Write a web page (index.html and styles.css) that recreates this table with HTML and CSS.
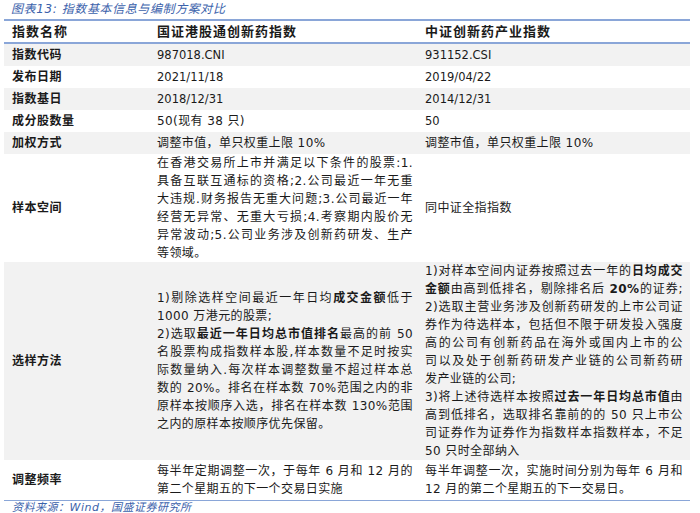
FILE: index.html
```html
<!DOCTYPE html>
<html lang="zh-CN">
<head>
<meta charset="utf-8">
<title>指数基本信息与编制方案对比</title>
<link rel="stylesheet" href="styles.css">
</head>
<body>
<div class="page">
  <div class="title">图表13: 指数基本信息与编制方案对比</div>
  <table class="tbl">
    <colgroup><col class="c1"><col class="c2"><col class="c3"></colgroup>
    <thead>
      <tr><th>指数名称</th><th>国证港股通创新药指数</th><th>中证创新药产业指数</th></tr>
    </thead>
    <tbody>
      <tr class="g"><td class="lab">指数代码</td><td class="lat">987018.CNI</td><td class="lat">931152.CSI</td></tr>
      <tr><td class="lab">发布日期</td><td class="lat">2021/11/18</td><td class="lat">2019/04/22</td></tr>
      <tr class="g"><td class="lab">指数基日</td><td class="lat">2018/12/31</td><td class="lat">2014/12/31</td></tr>
      <tr><td class="lab">成分股数量</td><td>50(现有 38 只)</td><td class="lat">50</td></tr>
      <tr class="g"><td class="lab">加权方式</td><td>调整市值，单只权重上限 10%</td><td>调整市值，单只权重上限 10%</td></tr>
      <tr class="tight">
        <td class="lab">样本空间</td>
        <td>
          <span class="ln">在香港交易所上市并满足以下条件的股票:1.</span>
          <span class="ln">具备互联互通标的资格;2.公司最近一年无重</span>
          <span class="ln">大违规.财务报告无重大问题;3.公司最近一年</span>
          <span class="ln">经营无异常、无重大亏损;4.考察期内股价无</span>
          <span class="ln">异常波动;5.公司业务涉及创新药研发、生产</span>
          <span class="ln e">等领域。</span>
        </td>
        <td>同中证全指指数</td>
      </tr>
      <tr class="g tight">
        <td class="lab">选样方法</td>
        <td>
          <span class="ln">1)剔除选样空间最近一年日均<b>成交金额</b>低于</span>
          <span class="ln e">1000 万港元的股票;</span>
          <span class="ln">2)选取<b>最近一年日均总市值排名</b>最高的前 50</span>
          <span class="ln">名股票构成指数样本股,样本数量不足时按实</span>
          <span class="ln">际数量纳入.每次样本调整数量不超过样本总</span>
          <span class="ln">数的 20%。排名在样本数 70%范围之内的非</span>
          <span class="ln">原样本按顺序入选，排名在样本数 130%范围</span>
          <span class="ln e">之内的原样本按顺序优先保留。</span>
        </td>
        <td>
          <span class="ln">1)对样本空间内证券按照过去一年的<b>日均成交</b></span>
          <span class="ln"><b>金额</b>由高到低排名，剔除排名后 <b>20%</b>的证券;</span>
          <span class="ln">2)选取主营业务涉及创新药研发的上市公司证</span>
          <span class="ln">券作为待选样本，包括但不限于研发投入强度</span>
          <span class="ln">高的公司有创新药品在海外或国内上市的公</span>
          <span class="ln">司以及处于创新药研发产业链的公司新药研</span>
          <span class="ln e">发产业链的公司;</span>
          <span class="ln">3)将上述待选样本按照<b>过去一年日均总市值</b>由</span>
          <span class="ln">高到低排名，选取排名靠前的的 50 只上市公</span>
          <span class="ln">司证券作为证券作为指数样本指数样本，不足</span>
          <span class="ln e">50 只时全部纳入</span>
        </td>
      </tr>
      <tr class="last">
        <td class="lab">调整频率</td>
        <td>
          <span class="ln">每半年定期调整一次，于每年 6 月和 12 月的</span>
          <span class="ln e">第二个星期五的下一个交易日实施</span>
        </td>
        <td>
          <span class="ln">每半年调整一次，实施时间分别为每年 6 月和</span>
          <span class="ln e">12 月的第二个星期五的下一交易日。</span>
        </td>
      </tr>
    </tbody>
  </table>
  <div class="src">资料来源：Wind，国盛证券研究所</div>
</div>
</body>
</html>
```

FILE: styles.css
```css
html, body {
  margin: 0;
  padding: 0;
  background: #ffffff;
}

body {
  font-family: "DejaVu Sans", "Noto Sans CJK SC", sans-serif;
  color: #1a1a1a;
}

.page {
  width: 686px;
  padding-left: 4px;
}

.title {
  height: 19px;
  line-height: 19px;
  padding-left: 7px;
  font-size: 12px;
  font-style: italic;
  color: #3b62ab;
  letter-spacing: 0.6px;
}

.tbl {
  width: 686px;
  table-layout: fixed;
  border-collapse: collapse;
  border-top: 2px solid #8aa6d8;
  border-bottom: 1px solid #8aa6d8;
}

.c1 { width: 146px; }
.c2 { width: 269px; }
.c3 { width: 271px; }

.tbl th {
  height: 21px;
  padding: 0 6px 0 7px;
  text-align: left;
  font-size: 13px;
  font-weight: bold;
  letter-spacing: 1px;
  line-height: 21px;
  border-bottom: 2px solid #8aa6d8;
  vertical-align: middle;
}

.tbl td {
  padding: 2px 6px 2px 7px;
  font-size: 12px;
  line-height: 18px;
  letter-spacing: 0.4px;
  vertical-align: middle;
  text-align: left;
}

.tbl th:first-child,
.tbl td.lab {
  padding-left: 8px;
}

.tbl td:last-child,
.tbl th:last-child {
  padding-left: 6px;
  padding-right: 7px;
}

.tbl td.lab {
  font-weight: bold;
  letter-spacing: 0.5px;
}

.tbl td.lat {
  font-size: 11.5px;
  letter-spacing: 0;
}

.tbl tr.g td {
  background: #f2f2f2;
}

.tbl tr.tight td {
  padding-top: 0;
  padding-bottom: 0;
}

.ln {
  display: block;
  text-align: justify;
  text-align-last: justify;
}

.ln.e {
  text-align-last: left;
}

.ln b {
  font-weight: bold;
}

.src {
  height: 12px;
  line-height: 12px;
  padding-left: 8px;
  padding-top: 1px;
  font-size: 11px;
  font-style: italic;
  color: #3b62ab;
  letter-spacing: 0.5px;
}
```
